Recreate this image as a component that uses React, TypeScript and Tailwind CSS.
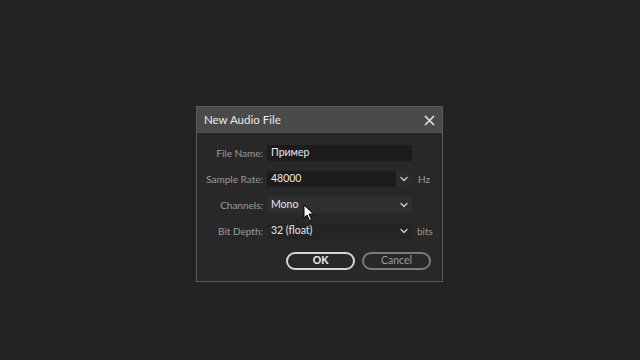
import React from "react";

const Chevron: React.FC = () => (
  <svg width="8" height="6" viewBox="0 0 8 6" fill="none" stroke="#c8c8c8" strokeWidth="1.4">
    <path d="M1 1.5l3 3 3-3" strokeLinecap="round" strokeLinejoin="round" />
  </svg>
);

const Label: React.FC<{ children: React.ReactNode }> = ({ children }) => (
  <div className="w-[70px] text-right text-[10px] text-[#9b9b9b] pr-[4px] leading-none">{children}</div>
);

const App: React.FC = () => {
  return (
    <div
      className="w-[640px] h-[360px] bg-[#232323] pl-[196px] pt-[106px] relative"
      style={{ fontFamily: "Lato, 'Open Sans', sans-serif" }}
    >
      <div className="w-[247px] h-[176px] border border-[#5a5a5a] bg-[#282828] flex flex-col">
        <div className="h-[26px] bg-[#4a4a4a] flex items-center justify-between pl-[7px] pr-[7px]">
          <span className="text-[11.5px] text-[#ececec]">New Audio File</span>
          <svg width="11" height="11" viewBox="0 0 11 11" stroke="#e8e8e8" strokeWidth="1.5">
            <path d="M1 1l9 9M10 1l-9 9" />
          </svg>
        </div>
        <div className="flex flex-col pt-[12px] gap-[10px]">
          <div className="flex items-center h-[16px]">
            <Label>File Name:</Label>
            <div className="w-[145px] h-[16px] bg-[#1c1c1c] flex items-center pl-[4px] text-[10.5px] text-[#e8e8e8]">
              Пример
            </div>
          </div>
          <div className="flex items-center h-[16px]">
            <Label>Sample Rate:</Label>
            <div className="w-[129px] h-[16px] bg-[#1c1c1c] flex items-center pl-[4px] text-[10.5px] text-[#e8e8e8]">
              48000
            </div>
            <div className="w-[16px] h-[16px] bg-[#2b2b2b] flex items-center justify-center">
              <Chevron />
            </div>
            <span className="ml-[6px] text-[10px] text-[#9b9b9b]">Hz</span>
          </div>
          <div className="flex items-center h-[16px]">
            <Label>Channels:</Label>
            <div className="w-[145px] h-[16px] bg-[#2f2f2f] flex items-center justify-between pl-[4px] pr-[4px] text-[10.5px] text-[#e8e8e8]">
              <span>Mono</span>
              <Chevron />
            </div>
          </div>
          <div className="flex items-center h-[16px]">
            <Label>Bit Depth:</Label>
            <div className="w-[145px] h-[16px] bg-[#242424] flex items-center justify-between pl-[4px] pr-[4px] text-[10.5px] text-[#e8e8e8]">
              <span>32 (float)</span>
              <Chevron />
            </div>
            <span className="ml-[5px] text-[10px] text-[#9b9b9b]">bits</span>
          </div>
        </div>
        <div className="flex justify-end gap-[7px] pr-[11px] mt-[13px]">
          <button className="w-[69px] h-[18px] rounded-full border-2 border-[#d6d6d6] text-[10.5px] font-bold text-[#f0f0f0] flex items-center justify-center">
            OK
          </button>
          <button className="w-[69px] h-[18px] rounded-full border-2 border-[#7a7a7a] text-[10.5px] text-[#9a9a9a] flex items-center justify-center">
            Cancel
          </button>
        </div>
      </div>
      <svg className="absolute left-[303px] top-[204px]" width="12" height="18" viewBox="0 0 12 18">
        <path d="M1 1v13l3-3 2.5 5.5 2-1L6 10h4.5z" fill="#ffffff" stroke="#000" strokeWidth="1" strokeLinejoin="round" />
      </svg>
    </div>
  );
};

export default App;
